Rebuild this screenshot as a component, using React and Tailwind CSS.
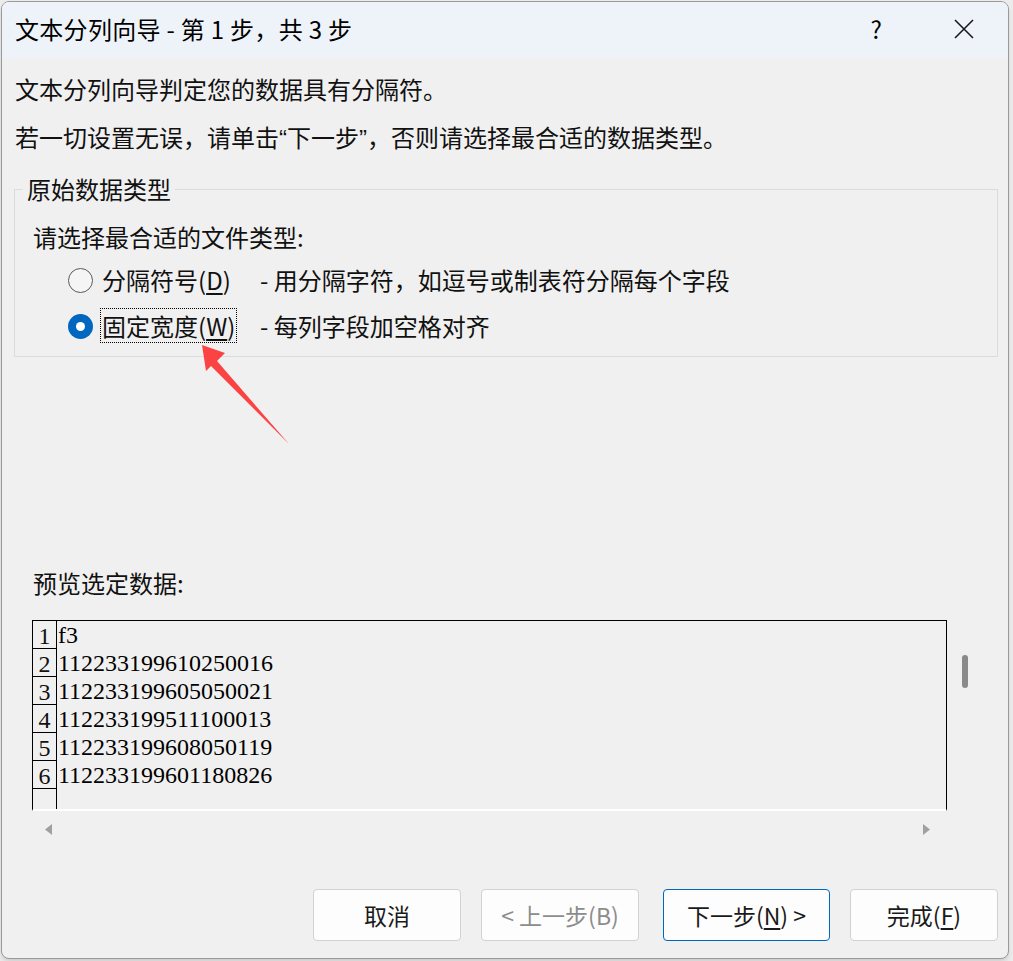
import React from 'react';

const FONT = { fontFamily: '"Noto Sans CJK SC", "Noto Sans", sans-serif' };
const LATIN = { fontFamily: '"Liberation Sans", sans-serif' };

const ROWS = ['f3', '112233199610250016', '112233199605050021', '112233199511100013', '112233199608050119', '112233199601180826'];

const Radio = ({ checked }) =>
  checked ? (
    <span className="flex h-[25px] w-[25px] shrink-0 items-center justify-center rounded-full bg-[#0067c0]">
      <span className="h-[9px] w-[9px] rounded-full bg-white" />
    </span>
  ) : (
    <span className="h-[25px] w-[25px] shrink-0 rounded-full border-[1.5px] border-[#5a5a5a] bg-[#f5f5f5]" />
  );

const Btn = ({ children, primary, disabled }) => (
  <button
    className={`flex h-[52px] w-full items-center justify-center rounded-[4px] border bg-[#fdfdfd] text-[23px] ${
      primary ? 'border-[#0067c0]' : 'border-[#d2d2d2]'
    } ${disabled ? 'text-[#8c8c8c]' : 'text-[#1a1a1a]'}`}
  >
    {children}
  </button>
);

export default function App() {
  return (
    <div className="relative h-[961px] w-[1013px] bg-[#ececec] pl-px pt-px" style={FONT}>
      <div className="flex h-[958px] w-[1008px] flex-col overflow-hidden rounded-[8px] border border-[#9a9a9a] bg-[#f0f0f0] shadow-md">
        {/* Title bar */}
        <div className="flex h-[56px] shrink-0 items-center bg-[#eef3fa] pb-[2px] pl-[13px] pr-[34px]">
          <span className="text-[24px] tracking-[0.3px] text-black">文本分列向导 - 第 1 步，共 3 步</span>
          <span className="ml-auto mr-[72px] text-[24px] text-black">?</span>
          <svg width="20" height="20" viewBox="0 0 20 20">
            <path d="M1 1 L19 19 M19 1 L1 19" stroke="#1a1a1a" strokeWidth="1.6" />
          </svg>
        </div>

        {/* Body */}
        <div className="flex flex-col pl-[12px] pr-[10px] text-[24px] text-[#111]">
          <p className="mt-[15px] pl-px leading-[32px]">文本分列向导判定您的数据具有分隔符。</p>
          <p className="mt-[16px] pl-px leading-[32px]">
            若一切设置无误，请单击<span style={LATIN}>“</span>下一步<span style={LATIN}>”</span>，否则请选择最合适的数据类型。
          </p>

          <fieldset className="mt-[21px] min-w-0 border border-[#dcdcdc] p-0 pb-[7px]">
            <legend className="ml-[8px] px-[4px] leading-[26px]">原始数据类型</legend>
            <div className="mt-[19px] pl-[18px] leading-[32px]">请选择最合适的文件类型:</div>
            <div className="mt-[4px] flex h-[46px] items-center pl-[53px]">
              <Radio />
              <span className="ml-[7px] w-[160px] pl-[2px]">
                分隔符号(<span className="underline underline-offset-[3px]">D</span>)
              </span>
              <span>- 用分隔字符，如逗号或制表符分隔每个字段</span>
            </div>
            <div className="flex h-[46px] items-center pl-[53px]">
              <Radio checked />
              <span className="ml-[7px] w-[160px]">
                <span className="inline-block border border-dotted border-black px-px leading-[33px]">
                  固定宽度(<span className="underline underline-offset-[3px]">W</span>)
                </span>
              </span>
              <span>- 每列字段加空格对齐</span>
            </div>
          </fieldset>

          <div className="mt-[210px] pl-[19px] leading-[32px]">预览选定数据:</div>

          <div className="mt-[21px] flex pl-[18px]">
            <div
              className="flex h-[191px] w-[915px] border-x border-t border-black border-b-2 border-b-white"
              style={{ fontFamily: '"Liberation Serif", serif' }}
            >
              <div className="flex w-[24px] shrink-0 flex-col border-r border-black">
                {ROWS.map((_, i) => (
                  <div key={i} className="h-[28px] border-b border-black text-center text-[24px] leading-[30px]">
                    {i + 1}
                  </div>
                ))}
              </div>
              <div className="flex flex-col pl-[1px]">
                {ROWS.map((r) => (
                  <div key={r} className="h-[28px] text-[24px] leading-[28px] text-black">
                    {r}
                  </div>
                ))}
              </div>
            </div>
            <div className="ml-[15px] mt-[35px] h-[33px] w-[6px] rounded-full bg-[#8a8a8a]" />
          </div>

          <div className="flex h-[36px] items-center pl-[31px] pr-[68px]">
            <svg width="7" height="11" viewBox="0 0 7 11">
              <path d="M7 0 L0 5.5 L7 11 Z" fill="#a0a0a0" />
            </svg>
            <svg width="7" height="11" viewBox="0 0 7 11" className="ml-auto">
              <path d="M0 0 L7 5.5 L0 11 Z" fill="#a0a0a0" />
            </svg>
          </div>

          <div className="mt-[42px] flex justify-end">
            <div className="w-[148px]"><Btn>取消</Btn></div>
            <div className="ml-[20px] w-[158px]"><Btn disabled>&lt; 上一步(B)</Btn></div>
            <div className="ml-[24px] w-[167px]">
              <Btn primary>
                下一步(<span className="underline underline-offset-[3px]">N</span>) &gt;
              </Btn>
            </div>
            <div className="ml-[20px] w-[148px]">
              <Btn>
                完成(<span className="underline underline-offset-[3px]">F</span>)
              </Btn>
            </div>
          </div>
        </div>
      </div>

      {/* red annotation arrow */}
      <svg className="pointer-events-none absolute left-0 top-0" width="1013" height="961" viewBox="0 0 1013 961">
        <polygon points="202,345 225,353 217,361 289,444 211,366 206,371" fill="#fb4343" />
      </svg>
    </div>
  );
}
